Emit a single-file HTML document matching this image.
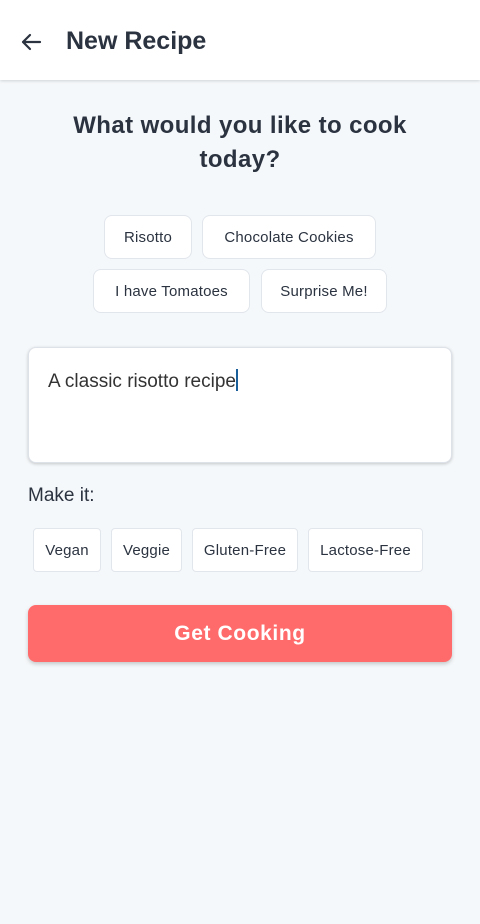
<!DOCTYPE html>
<html><head><style>
*{margin:0;padding:0;box-sizing:border-box}
body{width:480px;height:924px;background:#f5f8fa;font-family:"Liberation Sans",sans-serif;color:#2b3340;position:relative;overflow:hidden}
.hdr{position:absolute;left:0;top:0;width:480px;height:80px;background:#fff;box-shadow:0 1px 3px rgba(0,0,0,.15)}
.t{position:absolute;left:66px;top:27px;font-size:25px;font-weight:bold;color:#2b3340}
.a{position:absolute}
.chip{position:absolute;background:#fff;border:1px solid #e1e6ec;border-radius:8px;display:flex;align-items:center;justify-content:center;font-size:15px;color:#2b3340;letter-spacing:.2px}
.sq{border-radius:4px}
h1{position:absolute;left:0;width:480px;top:109px;text-align:center;font-size:24px;line-height:34px;font-weight:bold;color:#2b3340;letter-spacing:.4px}
.box{position:absolute;left:28px;top:347px;width:424px;height:116px;background:#fff;border:1px solid #dde2e8;border-radius:8px;box-shadow:0 1px 3px rgba(0,0,0,.2)}
.btn{position:absolute;left:28px;top:605px;width:424px;height:57px;background:#ff6b6b;border-radius:8px;color:#fff;font-weight:bold;font-size:21px;letter-spacing:.6px;display:flex;align-items:center;justify-content:center;box-shadow:0 2px 4px rgba(0,0,0,.2)}
</style></head><body>
<div class="hdr">
<svg class="a" style="left:19px;top:30px" width="24" height="24" viewBox="0 0 24 24"><path d="M21 12H4M11 5l-7 7 7 7" fill="none" stroke="#2b3340" stroke-width="2.2" stroke-linecap="round" stroke-linejoin="round"/></svg>
<div class="t">New Recipe</div>
</div>
<h1>What would you like to cook<br>today?</h1>
<div class="chip" style="left:104px;top:215px;width:88px;height:44px">Risotto</div>
<div class="chip" style="left:202px;top:215px;width:174px;height:44px">Chocolate Cookies</div>
<div class="chip" style="left:93px;top:269px;width:157px;height:44px">I have Tomatoes</div>
<div class="chip" style="left:261px;top:269px;width:126px;height:44px">Surprise Me!</div>
<div class="box"><div class="a" style="left:19px;top:21px;font-size:19px;color:#333">A classic risotto recipe<span style="display:inline-block;width:2px;height:22px;background:#1a5f9a;vertical-align:-4px"></span></div></div>
<div class="a" style="left:28px;top:485px;font-size:19px;color:#2b3340">Make it:</div>
<div class="chip sq" style="left:33px;top:528px;width:68px;height:44px">Vegan</div>
<div class="chip sq" style="left:111px;top:528px;width:71px;height:44px">Veggie</div>
<div class="chip sq" style="left:192px;top:528px;width:106px;height:44px">Gluten-Free</div>
<div class="chip sq" style="left:308px;top:528px;width:115px;height:44px">Lactose-Free</div>
<div class="btn">Get Cooking</div>
</body></html>
